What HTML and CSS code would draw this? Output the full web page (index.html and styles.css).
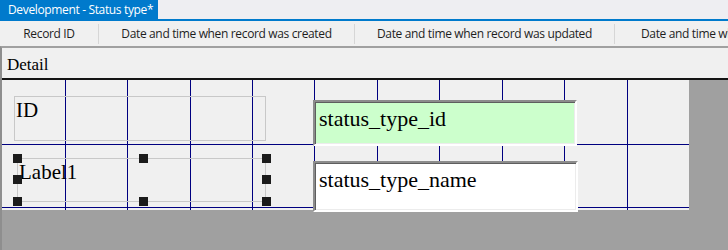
FILE: index.html
```html
<!DOCTYPE html>
<html>
<head>
<meta charset="utf-8">
<link rel="stylesheet" href="styles.css">
</head>
<body>
<div class="window">
  <div class="tabstrip">
    <div class="tab">Development - Status type*</div>
  </div>
  <div class="tabline"></div>
  <div class="colheader">
    <div class="col col-id">Record ID</div>
    <div class="col col-created">Date and time when record was created</div>
    <div class="col col-updated">Date and time when record was updated</div>
    <div class="col col-last">Date and time when record was deleted</div>
  </div>
  <div class="designer">
    <div class="section">Detail</div>
    <div class="workspace">
      <div class="surface">
        <svg class="grid" width="687" height="130" viewBox="0 0 687 130">
          <g stroke="#000080" stroke-width="1">
            <line x1="63.5" y1="0" x2="63.5" y2="130"/>
            <line x1="125.5" y1="0" x2="125.5" y2="130"/>
            <line x1="188.5" y1="0" x2="188.5" y2="130"/>
            <line x1="250.5" y1="0" x2="250.5" y2="130"/>
            <line x1="312.5" y1="0" x2="312.5" y2="130"/>
            <line x1="375.5" y1="0" x2="375.5" y2="130"/>
            <line x1="437.5" y1="0" x2="437.5" y2="130"/>
            <line x1="500.5" y1="0" x2="500.5" y2="130"/>
            <line x1="562.5" y1="0" x2="562.5" y2="130"/>
            <line x1="625.5" y1="0" x2="625.5" y2="130"/>
            <line x1="0" y1="64.5" x2="687" y2="64.5"/>
            <line x1="0" y1="127.5" x2="687" y2="127.5"/>
          </g>
        </svg>
        <div class="label label-id">ID</div>
        <div class="label label-1">Label1
          <span class="handle h-tl"></span>
          <span class="handle h-tm"></span>
          <span class="handle h-tr"></span>
          <span class="handle h-ml"></span>
          <span class="handle h-mr"></span>
          <span class="handle h-bl"></span>
          <span class="handle h-bm"></span>
          <span class="handle h-br"></span>
        </div>
        <div class="textbox tb-id">status_type_id</div>
        <div class="textbox tb-name">status_type_name</div>
      </div>
    </div>
  </div>
</div>
</body>
</html>
```
FILE: styles.css
```css
html, body {
  margin: 0;
  padding: 0;
}
body {
  width: 728px;
  height: 250px;
  overflow: hidden;
  background: #eeeef2;
  font-family: "Open Sans", "Noto Sans", sans-serif;
}
.window {
  display: flex;
  flex-direction: column;
  height: 250px;
}
.tabstrip {
  height: 19px;
  display: flex;
}
.tab {
  width: 158px;
  box-sizing: border-box;
  background: #007acc;
  color: #ffffff;
  font-size: 12px;
  line-height: 19px;
  padding-left: 8px;
  white-space: nowrap;
  letter-spacing: -0.35px;
}
.tabline {
  height: 2px;
  background: #007acc;
}
.colheader {
  height: 25px;
  display: flex;
  align-items: center;
  background: #f0f0f0;
  font-size: 12px;
  color: #1e1e1e;
  white-space: nowrap;
  overflow: hidden;
  letter-spacing: -0.35px;
}
.col {
  height: 20px;
  line-height: 20px;
  text-align: center;
  flex: none;
  border-right: 1px solid #d6d6d6;
  box-sizing: border-box;
}
.col-id { width: 99px; }
.col-created { width: 256px; }
.col-updated { width: 260px; }
.col-last {
  width: 200px;
  text-align: left;
  padding-left: 26px;
  border-right: none;
}
.designer {
  flex: 1;
  display: flex;
  flex-direction: column;
  border-top: 2px solid #a0a0a0;
  border-left: 2px solid #8e8e8e;
  background: #a0a0a0;
}
.section {
  height: 32px;
  box-sizing: border-box;
  background: #f0f0f0;
  border-bottom: 2px solid #141414;
  font-family: "Liberation Serif", "Times New Roman", serif;
  font-size: 17px;
  line-height: 20px;
  padding: 7px 0 0 5px;
  color: #000;
}
.workspace {
  flex: 1;
  display: flex;
  align-items: flex-start;
}
.surface {
  position: relative;
  width: 687px;
  height: 130px;
  background: #f0f0f0;
  flex: none;
}
.grid {
  position: absolute;
  left: 0;
  top: 0;
}
.label {
  position: absolute;
  box-sizing: border-box;
  border: 1px solid #c8c8c8;
  font-family: "Liberation Serif", "Times New Roman", serif;
  font-size: 21px;
  line-height: 24px;
  padding: 1px 0 0 1px;
  color: #000;
}
.label-id {
  left: 12px;
  top: 16px;
  width: 252px;
  height: 45px;
}
.label-1 {
  left: 15px;
  top: 78px;
  width: 249px;
  height: 44px;
}
.handle {
  position: absolute;
  width: 9px;
  height: 9px;
  background: #1b1b1b;
}
.h-tl { left: -5px; top: -5px; }
.h-tm { left: 121px; top: -5px; }
.h-tr { left: 244px; top: -5px; }
.h-ml { left: -5px; top: 16px; }
.h-mr { left: 244px; top: 16px; }
.h-bl { left: -5px; top: 38px; }
.h-bm { left: 121px; top: 38px; }
.h-br { left: 244px; top: 38px; }
.textbox {
  position: absolute;
  box-sizing: border-box;
  border: 2px solid;
  border-color: #8c8c8c #ffffff #ffffff #8c8c8c;
  box-shadow: inset 1px 1px 0 #5e5e5e, inset -1px -1px 0 #ececec;
  font-family: "Liberation Serif", "Times New Roman", serif;
  font-size: 22px;
  line-height: 25px;
  padding: 4px 0 0 4px;
  color: #000;
  white-space: nowrap;
}
.tb-id {
  left: 311px;
  top: 20px;
  width: 264px;
  height: 46px;
  background: #ccffcc;
}
.tb-name {
  left: 311px;
  top: 81px;
  width: 265px;
  height: 51px;
  background: #ffffff;
}
```
